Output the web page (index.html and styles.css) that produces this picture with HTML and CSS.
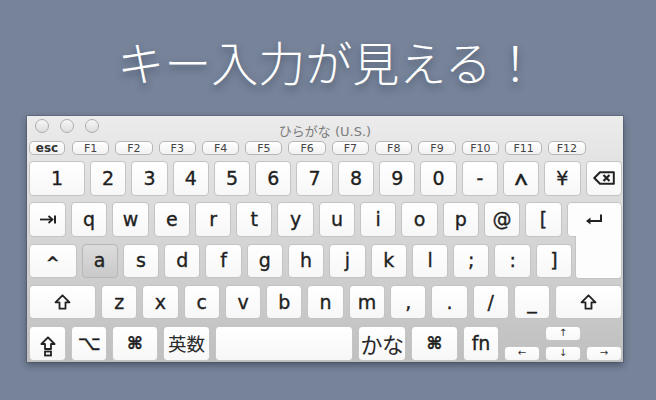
FILE: index.html
```html
<!DOCTYPE html>
<html lang="ja">
<head>
<meta charset="utf-8">
<title>キー入力が見える！</title>
<link rel="stylesheet" href="styles.css">
</head>
<body>
<h1 class="headline">キー入力が見える！</h1>
<div class="window">
  <div class="titlebar">
    <div class="lights"><span class="light"></span><span class="light"></span><span class="light"></span></div>
    <div class="title">ひらがな (U.S.)</div>
  </div>
  <div class="fnrow">
    <div class="fkey fkey-esc">esc</div>
    <div class="fkey">F1</div><div class="fkey">F2</div><div class="fkey">F3</div><div class="fkey">F4</div>
    <div class="fkey">F5</div><div class="fkey">F6</div><div class="fkey">F7</div><div class="fkey">F8</div>
    <div class="fkey">F9</div><div class="fkey">F10</div><div class="fkey">F11</div><div class="fkey">F12</div>
  </div>
  <div class="rows">
    <div class="row">
      <div class="key key-one">1</div>
      <div class="key">2</div><div class="key">3</div><div class="key">4</div><div class="key">5</div>
      <div class="key">6</div><div class="key">7</div><div class="key">8</div><div class="key">9</div>
      <div class="key">0</div><div class="key">-</div><div class="key caret">^</div><div class="key">¥</div>
      <div class="key" aria-label="delete"><svg class="ico" width="22" height="14" viewBox="0 0 22 14"><path d="M7 1.2H20.8V12.8H7L1.3 7Z" fill="none" stroke="#222" stroke-width="2" stroke-linejoin="round"/><path d="M10.5 4L16.5 10M16.5 4L10.5 10" stroke="#222" stroke-width="2.2"/></svg></div>
    </div>
    <div class="row">
      <div class="key key-tab" aria-label="tab"><svg class="ico" width="18" height="9" viewBox="0 0 18 9"><path d="M1 4.5H13" stroke="#222" stroke-width="1.8"/><path d="M9.5 1L13.5 4.5L9.5 8" fill="none" stroke="#222" stroke-width="1.8"/><path d="M16 0.5V8.5" stroke="#222" stroke-width="2"/></svg></div>
      <div class="key">q</div><div class="key">w</div><div class="key">e</div><div class="key">r</div>
      <div class="key">t</div><div class="key">y</div><div class="key">u</div><div class="key">i</div>
      <div class="key">o</div><div class="key">p</div><div class="key">@</div><div class="key">[</div>
      <div class="key key-return" aria-label="return"><svg class="ico" width="19" height="11" viewBox="0 0 19 11"><path d="M17 0.5V7H3" fill="none" stroke="#222" stroke-width="2"/><path d="M2 7L6.5 3.5V10.5Z" fill="#222"/></svg></div>
    </div>
    <div class="row">
      <div class="key key-ctrl ctrl">^</div>
      <div class="key key-pressed">a</div><div class="key">s</div><div class="key">d</div><div class="key">f</div>
      <div class="key">g</div><div class="key">h</div><div class="key">j</div><div class="key">k</div>
      <div class="key">l</div><div class="key">;</div><div class="key">:</div><div class="key">]</div>
      <div class="spacer"></div>
    </div>
    <div class="row">
      <div class="key key-shift" aria-label="shift"><svg class="ico" width="17" height="16" viewBox="0 0 17 16"><path d="M8.5 1.3L15.5 8.3H11.5V14.7H5.5V8.3H1.5Z" fill="none" stroke="#222" stroke-width="1.8" stroke-linejoin="round"/></svg></div>
      <div class="key">z</div><div class="key">x</div><div class="key">c</div><div class="key">v</div>
      <div class="key">b</div><div class="key">n</div><div class="key">m</div><div class="key">,</div>
      <div class="key">.</div><div class="key">/</div><div class="key">_</div>
      <div class="key key-shift-r" aria-label="shift"><svg class="ico" width="17" height="16" viewBox="0 0 17 16"><path d="M8.5 1.3L15.5 8.3H11.5V14.7H5.5V8.3H1.5Z" fill="none" stroke="#222" stroke-width="1.8" stroke-linejoin="round"/></svg></div>
    </div>
    <div class="row">
      <div class="key key-caps" aria-label="caps lock"><svg class="ico" width="16" height="21" viewBox="0 0 16 21"><path d="M8 1.3L14.6 8H11V13H5V8H1.4Z" fill="none" stroke="#222" stroke-width="1.8" stroke-linejoin="round"/><rect x="5" y="15.5" width="6" height="4" fill="none" stroke="#222" stroke-width="1.8"/></svg></div>
      <div class="key key-opt">⌥</div>
      <div class="key key-cmd sym">⌘</div>
      <div class="key key-eisu cjk">英数</div>
      <div class="key key-space"></div>
      <div class="key key-kana cjk">かな</div>
      <div class="key key-cmd2 sym">⌘</div>
      <div class="key key-fn">fn</div>
      <div class="arrows">
        <div class="arrow-col arrow-col-low"><div class="key akey">←</div></div>
        <div class="arrow-col"><div class="key akey">↑</div><div class="key akey">↓</div></div>
        <div class="arrow-col arrow-col-low"><div class="key akey">→</div></div>
      </div>
    </div>
  </div>
</div>
</body>
</html>
```
FILE: styles.css
```css
* { box-sizing: border-box; }
html, body { margin: 0; padding: 0; }
body {
  width: 656px;
  height: 400px;
  overflow: hidden;
  background: #768399;
  font-family: "DejaVu Sans", "Noto Sans CJK JP", sans-serif;
}
.headline {
  margin: 0;
  height: 116px;
  font-family: "Noto Sans CJK JP", sans-serif;
  font-weight: 300;
  font-size: 47px;
  line-height: 122px;
  color: #ffffff;
  text-align: center;
  text-shadow: 0 4px 7px rgba(35, 45, 65, 0.5);
}
.window {
  width: 596px;
  height: 246px;
  margin-left: 27px;
  background: linear-gradient(#ececec 0px, #e3e3e3 45px, #d2d2d2 140px, #bfbfbf 246px);
  box-shadow: 0 0 0 1px rgba(70, 75, 90, 0.35), 0 3px 7px rgba(20, 25, 40, 0.45);
}
.titlebar {
  height: 25px;
  display: grid;
  grid-template-columns: 1fr auto 1fr;
}
.lights {
  display: flex;
  gap: 11px;
  padding: 3px 0 0 8px;
}
.light {
  width: 14px;
  height: 14px;
  border-radius: 50%;
  background: linear-gradient(#f6f6f6, #dedede);
  border: 1px solid #adadad;
}
.title {
  font-size: 13px;
  color: #7c7c7c;
  padding-top: 5px;
  white-space: nowrap;
}
.fnrow {
  display: flex;
  gap: 6px;
  height: 14px;
  padding: 0 1px 0 2px;
}
.fkey {
  width: 37.3px;
  height: 14px;
  flex: none;
  border: 1px solid #b6b6b6;
  border-radius: 5px;
  background: linear-gradient(#ffffff, #f1f1f1);
  display: flex;
  align-items: center;
  justify-content: center;
  font-size: 11px;
  line-height: 1;
  color: #444;
}
.fkey-esc {
  width: 36px;
  margin-right: 1px;
  font-size: 12px;
  font-weight: bold;
  color: #333;
}
.rows {
  display: flex;
  flex-direction: column;
  gap: 6.75px;
  padding: 6px 1px 0 2px;
}
.row {
  display: flex;
  gap: 5px;
  height: 34.5px;
}
.key {
  width: 36.3px;
  flex: none;
  position: relative;
  border: 1px solid #c4c4c4;
  border-radius: 4px;
  background: linear-gradient(#ffffff, #f7f7f7);
  display: flex;
  align-items: center;
  justify-content: center;
  font-size: 19px;
  line-height: 1;
  color: #1f1f1f;
  -webkit-text-stroke: 0.35px #1f1f1f;
}
.ico { display: block; }
.key-one { width: 56px; }
.key-tab { width: 37px; }
.key-return {
  flex: 1;
  width: auto;
  background: #fdfdfd;
  border-bottom-right-radius: 0;
  padding-right: 2px;
}
.key-return::after {
  content: "";
  position: absolute;
  right: -1px;
  top: 100%;
  width: 45px;
  height: 42.25px;
  background: #fdfdfd;
  border: 1px solid #c4c4c4;
  border-top: none;
  border-radius: 0 0 4px 4px;
}
.key-ctrl { width: 47.5px; }
.spacer { flex: 1; }
.key-pressed {
  background: linear-gradient(#dcdcdc, #c9c9c9);
  border-color: #b7b7b7;
}
.key-shift { width: 67px; }
.key-shift-r { flex: 1; width: auto; }
.caret {
  font-family: "Noto Sans", sans-serif;
  font-weight: 600;
  font-size: 24px;
  padding-top: 7px;
}
.ctrl {
  font-weight: bold;
  font-size: 16px;
  padding-top: 4px;
}
.sym { font-weight: bold; font-size: 17px; }
.key-opt { width: 36px; font-size: 20px; }
.key-cmd { width: 46px; }
.key-caps { width: 37px; padding-top: 6px; }
.key-eisu { width: 47px; }
.key-space { width: 138px; }
.key-kana { width: 48px; }
.key-cmd2 { width: 47px; }
.key-fn { width: 36px; }
.cjk {
  font-family: "Noto Sans CJK JP", sans-serif;
  font-size: 18.5px;
  -webkit-text-stroke: 0;
  color: #2a2a2a;
}
.key-kana.cjk { font-size: 22px; letter-spacing: -0.5px; }
.arrows {
  flex: 1;
  display: flex;
  gap: 5px;
}
.arrow-col {
  flex: 1;
  display: flex;
  flex-direction: column;
  justify-content: space-between;
}
.arrow-col-low { justify-content: flex-end; }
.akey {
  width: auto;
  height: 14.5px;
  font-size: 10px;
  color: #333;
  -webkit-text-stroke: 0;
}
```
